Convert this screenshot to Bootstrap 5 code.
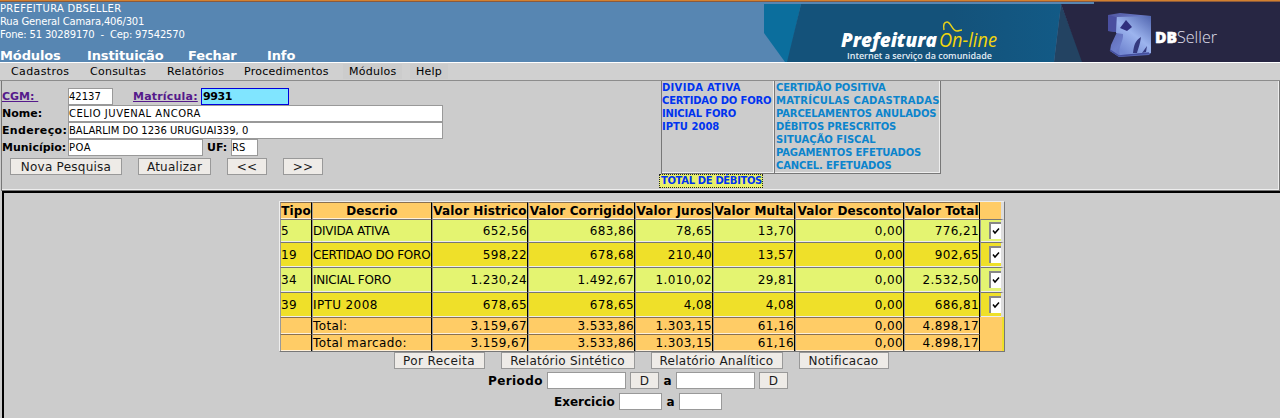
<!DOCTYPE html>
<html lang="pt-BR">
<head>
<meta charset="utf-8">
<title>Prefeitura On-line</title>
<link href="https://cdn.jsdelivr.net/npm/bootstrap@5.3.0/dist/css/bootstrap.min.css" rel="stylesheet">
<style>
body{background:#ccc;color:#000;font:11px/13px "DejaVu Sans",sans-serif;height:418px;overflow:hidden}
.topo{height:62px;background:#5786b2;border-top:1px solid #d2802f;box-shadow:inset 0 1px #8b5a3c;color:#fff}
.dados{font-size:10px;padding-top:1px;white-space:pre;letter-spacing:-.17px}
.principal{font-size:13px;font-weight:700;line-height:15px;display:grid;grid-template-columns:87px 101px 79px 60px;margin-top:7px;letter-spacing:-.12px}
.e3{letter-spacing:.3px}.e5{letter-spacing:.5px}.e2{letter-spacing:.2px}.n2{letter-spacing:-.2px}.n1{letter-spacing:-.1px}
.submenu{height:19px;background:#d0d0d0;border-top:1px solid #fff;border-bottom:1px solid #8c8c8c;line-height:17px;display:grid;grid-template-columns:79px 77px 77px 99px 67px 37px;padding-left:11px;letter-spacing:.25px}
.submenu .solto{background:#ccc;height:15px;margin-top:1px;line-height:15px;padding:0 6px;justify-self:start}
.painel{height:110px;margin-left:1px;border-left:1px solid #777;border-right:1px solid #777;border-bottom:1px solid #777;box-shadow:inset -1px -1px #eee}
.consulta{width:658px;padding-top:7px;font-weight:700}
.linha{height:17px;line-height:17px}
.rot{width:66px;white-space:nowrap}
.campo{height:17px;background:#fff;border:1px solid #999;font-size:10px;font-weight:400;line-height:15px;padding-left:0;white-space:nowrap;flex:none}
.campo.ativo{background:#80e5ff;border-color:#00d;font-size:11px;font-weight:700;letter-spacing:-.4px;padding-left:1px}
.roxo{color:#551a8b;text-decoration:underline}
.botao{height:17px;background:#eeebe7;border:1px solid #999;border-radius:0;font-size:12px;font-weight:400;line-height:16px;text-align:center;color:#1a1a1a;flex:none;white-space:nowrap;letter-spacing:.25px}
.links{font-size:10px;font-weight:700;line-height:13px;white-space:nowrap;height:93px;border:solid #777;border-width:0 1px 1px 0;width:280px;letter-spacing:-.15px}
.links>div{border-left:1px solid #777;box-shadow:inset -1px -1px #eee;height:92px}
.debitos{color:#0033f0;width:113px}
.outros{color:#0b84cc;width:166px;padding-left:1px}
.total{font-size:10px;font-weight:700;line-height:12px;width:104px;height:14px;border:1px dotted #222;background:#e8f06a;color:#0033f0;white-space:nowrap;letter-spacing:-.35px;margin-left:-2px;padding-left:1px}
.corpo{height:227px;border-top:2px solid #000;border-left:2px solid #000;margin-left:2px;padding-top:8px}
.grade{width:726px;height:151px;border:1px solid #eee;border-right-color:#777;border-bottom-color:#777;table-layout:fixed;border-collapse:separate;border-spacing:0;font-size:12px;line-height:14px;color:#000;margin:0 auto}
.grade th,.grade td{padding:0;border-top:1px solid #777;border-left:1px solid #999;border-right:1px solid #000;box-shadow:inset 0 -1px #eee;white-space:nowrap;text-align:right;vertical-align:middle;letter-spacing:.38px}
.grade th{text-align:center;font-weight:700;letter-spacing:.12px}
.grade td:nth-child(-n+2){text-align:left}
.grade td.n2{letter-spacing:-.24px}
.grade tr>:last-child{border-right:3px solid #ddd}
.lar{background:#fc6}.ver{background:#e4f471}.ama{background:#efe029}
.lar th,.lar td{box-shadow:inset 0 -1px #fff0d8;border-top-color:#8a7050}
.grade .lar>:last-child{border-left:0;border-top:0;box-shadow:none}
.grade .lar>td:last-child{border-right:2px solid #efe029}
.cx{display:block;width:12px;height:17px;margin:-2px 0 0 8px;background:#fff;border:solid #888;border-width:2px 0 0 2px}
.cx svg{display:block}
.forte{font-size:12px;font-weight:700;line-height:19px}
</style>
</head>
<body>
<header class="topo d-flex justify-content-between">
  <div>
    <div class="dados"><div class="e3">PREFEITURA DBSELLER</div><div>Rua General Camara,406/301</div><div>Fone: 51 30289170  -  Cep: 97542570</div></div>
    <nav class="principal"><span>Módulos</span><span>Instituição</span><span>Fechar</span><span>Info</span></nav>
  </div>
  <svg width="516" height="61" viewBox="764 1 516 61">
    <defs>
      <linearGradient id="mar"><stop offset=".6" stop-color="#14527a"/><stop offset="1" stop-color="#125a86"/></linearGradient>
      <linearGradient id="cubo" x1="0" y1="0" x2="1" y2="1"><stop offset="0" stop-color="#50569f"/><stop offset=".5" stop-color="#6d7ecb"/><stop offset="1" stop-color="#5363b0"/></linearGradient>
      <linearGradient id="face" x1="1" y1="0" x2=".3" y2="1"><stop offset="0" stop-color="#5064ae"/><stop offset=".55" stop-color="#9cb4ee"/><stop offset="1" stop-color="#7388d2"/></linearGradient>
    </defs>
    <path d="M764 4h37l-13 58h-3l-21-29z" fill="#0b6e9d"/>
    <path d="M801 4h260l-7 58H787z" fill="url(#mar)"/>
    <path d="M1061 4l-7 58h29z" fill="#234362"/>
    <path d="M1094 2h186v60h-198L1061 4h33z" fill="#272643"/>
    <g font-family="Open Sans,sans-serif">
      <text x="841" y="47" font-size="19.5" font-weight="800" font-style="italic" fill="#fff" textLength="96" lengthAdjust="spacingAndGlyphs">Prefeitura</text>
      <text x="939" y="47" font-size="20" font-style="italic" fill="#f2d60c" textLength="58" lengthAdjust="spacingAndGlyphs">On-line</text>
      <text x="847" y="59" font-size="9.5" font-weight="600" fill="#e2edf5" textLength="145" lengthAdjust="spacingAndGlyphs">Internet a serviço da comunidade</text>
    </g>
    <path d="M944 30c-1-5 0-8 3-8 4 0 5 9 10 9 2 0 3-1 5-1" fill="none" stroke="#e8d21a" stroke-width="1.5"/>
    <path d="M1108 15l12-2 31 3v37l-2 2-30 2-9-6 1-6 6-13-9-1z" fill="url(#cubo)"/>
    <path d="M1117 17l34-1v37l-31 2c-3-7 4-14 3-21l-7-1z" fill="url(#face)"/>
    <path d="M1108 15l8 2v15l-8-1z" fill="#4a4fa0"/>
    <path d="M1126 20l6 7-5 4-7-3z" fill="#302f7e"/>
    <path d="M1133 53c1-8 2-12 8-16-1 8-3 12-4 16zM1142 53l5-7-1 6z" fill="#34397e"/>
    <path d="M1110 50l9 6 30-3" fill="none" stroke="#444f9e" stroke-width="1.5"/>
    <text x="1155" y="43" font-family="Open Sans,sans-serif" font-size="16" font-weight="800" fill="#fff" stroke="#fff" stroke-width=".5" textLength="22" lengthAdjust="spacingAndGlyphs">DB</text>
    <text x="1177" y="43" font-family="Open Sans,sans-serif" font-size="17" font-weight="300" fill="#e1e0ef" textLength="40" lengthAdjust="spacingAndGlyphs">Seller</text>
  </svg>
</header>
<nav class="submenu"><span style="letter-spacing:.38px">Cadastros</span><span>Consultas</span><span>Relatórios</span><span>Procedimentos</span><span class="solto">Módulos</span><span class="solto">Help</span></nav>

<section class="painel d-flex">
  <div class="consulta">
    <div class="linha d-flex"><span class="rot"><a class="roxo">CGM:&nbsp;</a></span><span class="campo" style="width:45px">42137</span><a class="roxo" style="width:68px;margin-left:20px"><span class="e2">Matrícula:</span></a><span class="campo ativo" style="width:88px">9931</span></div>
    <div class="linha d-flex"><span class="rot">Nome:</span><span class="campo e5" style="width:375px">CELIO JUVENAL ANCORA</span></div>
    <div class="linha d-flex"><span class="rot" style="letter-spacing:.35px">Endereço:</span><span class="campo" style="width:375px">BALARLIM DO 1236 URUGUAI339, 0</span></div>
    <div class="linha d-flex"><span class="rot">Município:</span><span class="campo e5" style="width:135px">POA</span><span style="width:28px;padding-left:4px">UF:</span><span class="campo" style="width:27px">RS</span></div>
    <div class="d-flex gap-3 ps-2" style="margin-top:2px"><span class="botao" style="width:112px">Nova Pesquisa</span><span class="botao" style="width:73px">Atualizar</span><span class="botao" style="width:40px">&lt;&lt;</span><span class="botao" style="width:40px">&gt;&gt;</span></div>
  </div>
  <div style="margin-left:1px">
    <div class="links d-flex">
      <div class="debitos"><span class="e3">DIVIDA ATIVA</span><br>CERTIDAO DO FORO<br>INICIAL FORO<br><span class="e0" style="letter-spacing:0">IPTU 2008</span></div>
      <div class="outros">CERTIDÃO POSITIVA<br><span class="e2">MATRÍCULAS CADASTRADAS</span><br>PARCELAMENTOS ANULADOS<br>DÉBITOS PRESCRITOS<br><span style="letter-spacing:0">SITUAÇÃO FISCAL</span><br>PAGAMENTOS EFETUADOS<br>CANCEL. EFETUADOS</div>
    </div>
    <div class="total">TOTAL DE DÉBITOS</div>
  </div>
</section>

<main class="corpo">
  <table class="grade">
    <colgroup><col style="width:32px"><col style="width:120px"><col style="width:96px"><col style="width:107px"><col style="width:78px"><col style="width:82px"><col style="width:109px"><col style="width:76px"><col style="width:24px"></colgroup>
    <tr class="lar" style="height:17px"><th>Tipo</th><th>Descrio</th><th>Valor Histrico</th><th>Valor Corrigido</th><th>Valor Juros</th><th>Valor Multa</th><th>Valor Desconto</th><th>Valor Total</th><th></th></tr>
    <tr class="ver" style="height:23px"><td>5</td><td class="n2">DIVIDA ATIVA</td><td>652,56</td><td>683,86</td><td>78,65</td><td>13,70</td><td>0,00</td><td>776,21</td><td><span class="cx"><svg width="10" height="14"><path d="M2 6.5l2 2.5 4-4.5" fill="none" stroke="#000" stroke-width="1.5"/></svg></span></td></tr>
    <tr class="ama" style="height:25px"><td>19</td><td class="n2">CERTIDAO DO FORO</td><td>598,22</td><td>678,68</td><td>210,40</td><td>13,57</td><td>0,00</td><td>902,65</td><td><span class="cx"><svg width="10" height="14"><path d="M2 6.5l2 2.5 4-4.5" fill="none" stroke="#000" stroke-width="1.5"/></svg></span></td></tr>
    <tr class="ver" style="height:25px"><td>34</td><td class="n2">INICIAL FORO</td><td>1.230,24</td><td>1.492,67</td><td>1.010,02</td><td>29,81</td><td>0,00</td><td>2.532,50</td><td><span class="cx"><svg width="10" height="14"><path d="M2 6.5l2 2.5 4-4.5" fill="none" stroke="#000" stroke-width="1.5"/></svg></span></td></tr>
    <tr class="ama" style="height:25px"><td>39</td><td class="e2">IPTU 2008</td><td>678,65</td><td>678,65</td><td>4,08</td><td>4,08</td><td>0,00</td><td>686,81</td><td><span class="cx"><svg width="10" height="14"><path d="M2 6.5l2 2.5 4-4.5" fill="none" stroke="#000" stroke-width="1.5"/></svg></span></td></tr>
    <tr class="lar" style="height:17px"><td></td><td>Total:</td><td>3.159,67</td><td>3.533,86</td><td>1.303,15</td><td>61,16</td><td>0,00</td><td>4.898,17</td><td></td></tr>
    <tr class="lar" style="height:17px"><td></td><td>Total marcado:</td><td>3.159,67</td><td>3.533,86</td><td>1.303,15</td><td>61,16</td><td>0,00</td><td>4.898,17</td><td></td></tr>
  </table>
  <div class="d-flex gap-3 justify-content-center" style="padding-right:2px"><span class="botao" style="width:91px;letter-spacing:.4px">Por Receita</span><span class="botao" style="width:134px">Relatório Sintético</span><span class="botao" style="width:132px">Relatório Analítico</span><span class="botao" style="width:90px">Notificacao</span></div>
  <div class="d-flex justify-content-center pe-2 forte" style="margin-top:3px;height:17px"><span style="width:59px;letter-spacing:.4px">Periodo</span><span class="campo" style="width:79px"></span><span class="botao ms-1" style="width:29px">D</span><span class="text-center" style="width:17px">a</span><span class="campo" style="width:79px"></span><span class="botao ms-1" style="width:29px">D</span></div>
  <div class="d-flex justify-content-center pe-2 forte" style="margin-top:4px;height:17px"><span style="width:65px">Exercicio</span><span class="campo" style="width:43px"></span><span class="text-center" style="width:17px">a</span><span class="campo" style="width:43px"></span></div>
</main>
<script src="https://cdn.jsdelivr.net/npm/bootstrap@5.3.0/dist/js/bootstrap.bundle.min.js"></script>
</body>
</html>
